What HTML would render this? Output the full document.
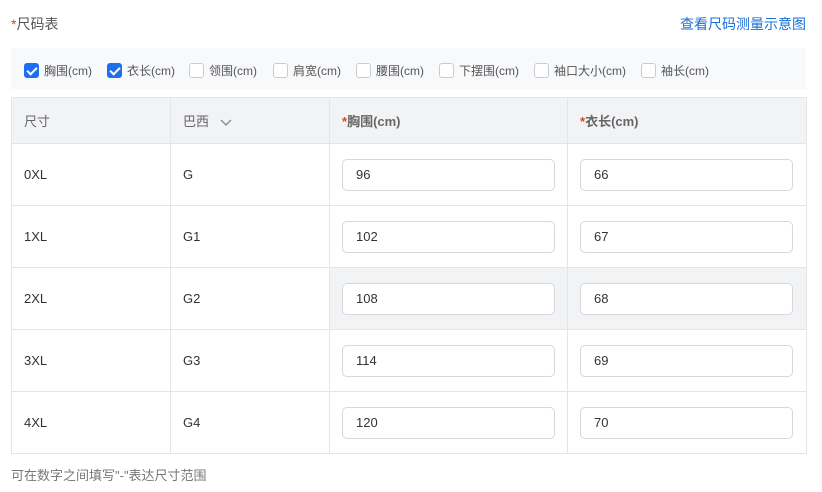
<!DOCTYPE html>
<html><head><meta charset="utf-8">
<style>
*{box-sizing:border-box;margin:0;padding:0}
body{width:822px;height:492px;background:#fff;font-family:"Liberation Sans","Noto Sans CJK SC",sans-serif;color:#333;position:relative;overflow:hidden;font-size:13px}
.abs{position:absolute}
.title{left:11px;top:14px;font-size:14px;color:#555}
.red{color:#e0451f}
.link{right:16px;top:14px;font-size:14px;color:#1a6fd6}
.bar{left:11px;top:48px;width:795px;height:41px;background:#f8f9fb}
.cb{position:absolute;top:14px;display:flex;align-items:center;font-size:12px;color:#555;white-space:nowrap}
.box{width:15px;height:15px;border:1px solid #c8ccd2;border-radius:3px;background:#fff;margin-right:5px;display:inline-block;position:relative}
.box.on{background:#1e6ff0;border-color:#1e6ff0}
.box.on:after{content:"";position:absolute;left:4px;top:1px;width:4px;height:8px;border:solid #fff;border-width:0 2px 2px 0;transform:rotate(45deg)}
table{position:absolute;left:11px;top:97px;border-collapse:collapse;width:796px}
td,th{border:1px solid #e3e5e8;text-align:left;font-weight:normal;padding:0 0 0 12px;font-size:13px;color:#333}
th{background:#f2f3f5;height:46px;color:#666;font-size:13px}
th.b{font-weight:bold;color:#666}
td{height:62px}
.g{background:#f2f3f5}
.inp{width:213px;height:32px;border:1px solid #d5d8dc;border-radius:5px;background:#fff;padding-left:13px;line-height:30px;font-size:13px;color:#333}
.note{left:11px;top:465px;font-size:13px;color:#777}
</style></head><body>
<div class="abs title"><span class="red">*</span>尺码表</div>
<div class="abs link">查看尺码测量示意图</div>
<div class="abs bar">
<div class="cb" style="left:13px"><span class="box on"></span>胸围(cm)</div>
<div class="cb" style="left:96px"><span class="box on"></span>衣长(cm)</div>
<div class="cb" style="left:178px"><span class="box"></span>领围(cm)</div>
<div class="cb" style="left:262px"><span class="box"></span>肩宽(cm)</div>
<div class="cb" style="left:345px"><span class="box"></span>腰围(cm)</div>
<div class="cb" style="left:428px"><span class="box"></span>下摆围(cm)</div>
<div class="cb" style="left:523px"><span class="box"></span>袖口大小(cm)</div>
<div class="cb" style="left:630px"><span class="box"></span>袖长(cm)</div>
</div>
<table>
<tr><th style="width:159px">尺寸</th><th style="width:159px">巴西 <svg width="14" height="10" style="margin-left:6px;vertical-align:middle"><path d="M2 2 L7 7 L12 2" fill="none" stroke="#888" stroke-width="1.3"/></svg></th><th class="b" style="width:238px"><span class="red">*</span>胸围(cm)</th><th class="b"><span class="red">*</span>衣长(cm)</th></tr>
<tr><td>0XL</td><td>G</td><td><div class="inp">96</div></td><td><div class="inp">66</div></td></tr>
<tr><td>1XL</td><td>G1</td><td><div class="inp">102</div></td><td><div class="inp">67</div></td></tr>
<tr><td>2XL</td><td>G2</td><td class="g"><div class="inp">108</div></td><td class="g"><div class="inp">68</div></td></tr>
<tr><td>3XL</td><td>G3</td><td><div class="inp">114</div></td><td><div class="inp">69</div></td></tr>
<tr><td>4XL</td><td>G4</td><td><div class="inp">120</div></td><td><div class="inp">70</div></td></tr>
</table>
<div class="abs note">可在数字之间填写"-"表达尺寸范围</div>
</body></html>
